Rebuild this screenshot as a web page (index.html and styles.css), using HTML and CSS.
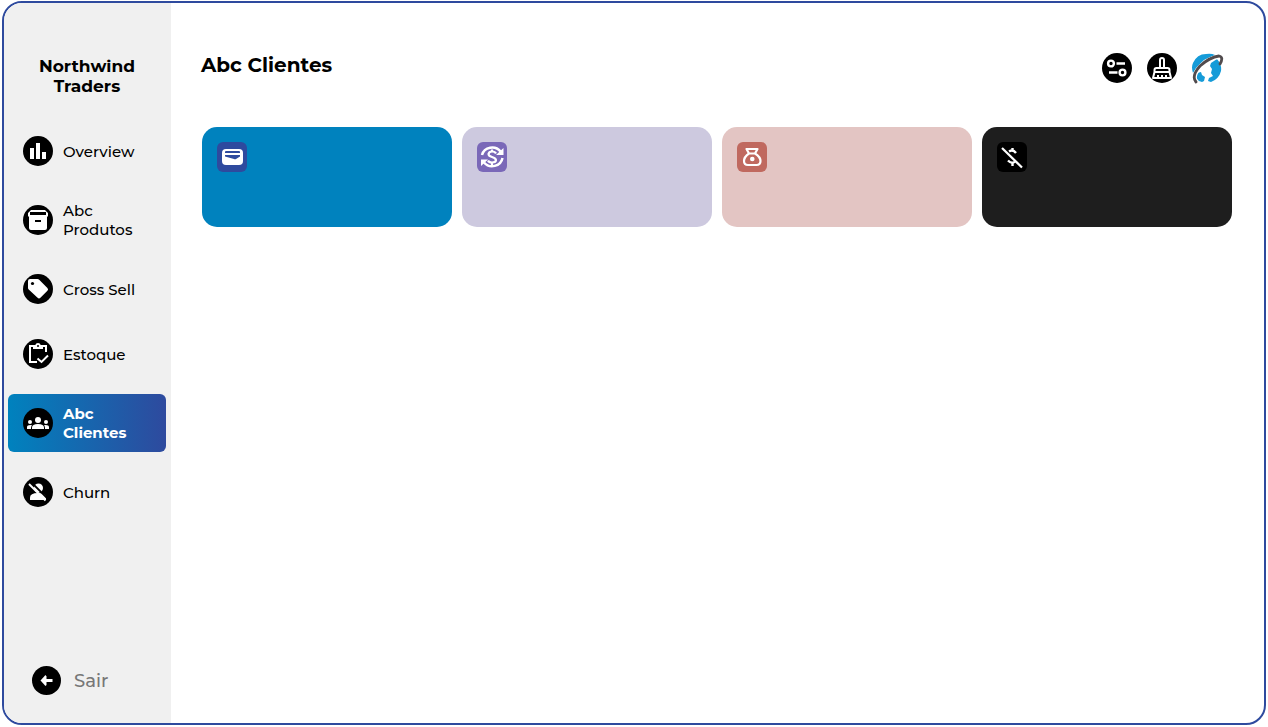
FILE: index.html
```html
<!DOCTYPE html>
<html lang="pt-BR">
<head>
<meta charset="utf-8">
<title>Abc Clientes</title>
<link rel="stylesheet" href="styles.css">
</head>
<body>
<div class="frame">
  <aside class="sidebar">
    <h2 class="brand">Northwind Traders</h2>
    <nav class="nav">
      <a class="nav-item" href="#overview">
        <svg class="icon" viewBox="0 0 30 30"><circle cx="15" cy="15" r="15"/><path fill="#fff" d="M7 12h4v11H7zM13 7h4v16h-4zM19 16h4v7h-4z"/></svg>
        <span>Overview</span>
      </a>
      <a class="nav-item" href="#produtos">
        <svg class="icon" viewBox="0 0 30 30"><circle cx="15" cy="15" r="15"/><path fill="#fff" d="M8 5h14l3 3v3l-1 1v11q0 2-2 2H8q-2 0-2-2V12l-1-1V8z"/><path d="M7 7h16v3H7zM12 15h6v2h-6z"/></svg>
        <span>Abc Produtos</span>
      </a>
      <a class="nav-item" href="#cross">
        <svg class="icon" viewBox="0 0 30 30"><circle cx="15" cy="15" r="15"/><path fill="#fff" d="M7 5h7.500q1 0 1.700.7l8.200 8.200q1.400 1.400 0 2.800l-7 7q-1.400 1.400-2.800 0L5.700 15.500Q5 14.800 5 14V7q0-2 2-2z"/><circle cx="9.500" cy="9.500" r="1.600"/></svg>
        <span>Cross Sell</span>
      </a>
      <a class="nav-item" href="#estoque">
        <svg class="icon" viewBox="0 0 30 30"><circle cx="15" cy="15" r="15"/><path fill="none" stroke="#fff" stroke-width="2" d="M14 23H7V7h4M19 7h4v6M14.500 19.500l4 3.500 6.500-6.500"/><path fill="#fff" d="M10 6h2.300a2.800 2.800 0 0 1 5.400 0H20v4H10z"/><circle cx="15" cy="7" r="1"/></svg>
        <span>Estoque</span>
      </a>
      <a class="nav-item active" href="#clientes" aria-current="page">
        <svg class="icon" viewBox="0 0 30 30"><circle cx="15" cy="15" r="15"/><g fill="#fff"><circle cx="15" cy="12" r="3"/><path d="M9 21v-1.500q0-3.500 6-3.500t6 3.500V21z"/><circle cx="7" cy="14" r="2"/><circle cx="23" cy="14" r="2"/><path d="M4 21v-2q0-2 3.500-2l1.500.3Q8 18.500 8 20v1zM26 21v-2q0-2-3.500-2l-1.500.3q1 1.200 1 2.700v1z"/></g></svg>
        <span>Abc Clientes</span>
      </a>
      <a class="nav-item" href="#churn">
        <svg class="icon" viewBox="0 0 30 30"><circle cx="15" cy="15" r="15"/><circle cx="15.500" cy="11" r="4.500" fill="#fff"/><path fill="#fff" d="M7 23v-2.500Q7 16 15 16q8 0 8 5v2z"/><path stroke="#000" stroke-width="2" d="M8.400 5.400l16 16"/><path stroke="#fff" stroke-width="2" d="M6 7l16.500 16.500"/></svg>
        <span>Churn</span>
      </a>
    </nav>
    <a class="exit" href="#sair">
      <svg class="exit-icon" viewBox="0 0 29 29"><circle cx="14.500" cy="14.500" r="14.500"/><path fill="none" stroke="#fff" stroke-width="3" d="M20.500 14.500H11"/><path fill="#fff" d="M8.500 14.500l5-5.500 1 1.500v8.500l-1 1z"/></svg>
      <span>Sair</span>
    </a>
  </aside>
  <main class="main">
    <header class="header">
      <h1 class="title">Abc Clientes</h1>
      <div class="actions">
        <button class="action" type="button" aria-label="Filtros">
          <svg class="icon" viewBox="0 0 30 30"><circle cx="15" cy="15" r="15"/><g fill="none" stroke="#fff" stroke-width="2.400"><circle cx="9" cy="10.500" r="2.900"/><circle cx="20.500" cy="19.500" r="2.900"/><path stroke-width="2.600" d="M14.500 10.500H23M7 19.500h8.500"/></g></svg>
        </button>
        <button class="action" type="button" aria-label="Limpar filtros">
          <svg class="icon" viewBox="0 0 30 30"><circle cx="15" cy="15" r="15"/><path fill="none" stroke="#fff" stroke-width="2" stroke-linejoin="round" d="M13 15V7q0-2 2-2t2 2v8M7.500 19v-2q0-2 2-2h11q2 0 2 2v2zM7.500 19L6 25h18l-1.500-6M11 25v-3M15 25v-3M19 25v-3"/></svg>
        </button>
        <a class="action" href="#site" aria-label="Site">
          <svg class="globe" viewBox="0 0 32 34"><path fill="#159bd8" d="M1 10Q5 1 14 1q5-1 9 1L12 7 4 15 1 20Q-1 14 1 10zM19 10l6-4q5 6 4 12-2 8-10 11l-3-1 1-3 4-2-2-3 1-4-2-3zM5 20l4-1 1 3 3 2-1 4-2 1q-4-1-6-4z"/><path fill="none" stroke="#fff" stroke-width="4" d="M4 28Q0 22 10 12 19 3 29 4"/><path fill="none" stroke="#514b4d" stroke-width="2.800" stroke-linecap="round" d="M4 29Q-1 23 8 13 18 4 27 3q5 1 1 8"/></svg>
        </a>
      </div>
    </header>
    <section class="cards">
      <article class="card blue">
        <svg class="icon" viewBox="0 0 30 30"><rect width="30" height="30" rx="6" fill="#2e4a9e"/><rect x="5" y="7" width="21" height="16" rx="4" fill="#fff"/><path fill="#2e4a9e" d="M8 10q0-1 1-1h13q1 0 1 1v1H8zM8 13h15v1.500L19 17q-1 .4-2 0l-9-2.500z"/></svg>
      </article>
      <article class="card purple">
        <svg class="icon" viewBox="0 0 30 30"><rect width="30" height="30" rx="6" fill="#7a68b8"/><g fill="none" stroke="#fff"><path stroke-width="2.500" d="M5 13A10.500 10 0 0 1 23.500 9.500M25.500 16A10.500 10 0 0 1 7 20.500"/><path stroke-width="2.200" d="M19 11.500q-1-2-4-2t-3.500 2.500q0 2 3.500 3t4 3q0 2.500-4 2.500-3 0-4-2M15 7.500v2M15 20.500v2.500"/></g><path fill="#fff" d="M26.500 6v7H19zM4 24v-6.500h7z"/></svg>
      </article>
      <article class="card rose">
        <svg class="icon" viewBox="0 0 30 30"><rect width="30" height="30" rx="6" fill="#c0695f"/><g fill="none" stroke="#fff" stroke-width="2.200" stroke-linejoin="round"><path d="M9.500 7h11l-2.500 4.500h-6zM12 11.500Q7 15 7 19q0 4 4 4h8.500q4 0 4-4 0-4-5.500-7.500"/></g><circle cx="15.300" cy="17" r="2.300" fill="#fff"/></svg>
      </article>
      <article class="card dark">
        <svg class="icon" viewBox="0 0 30 30"><rect width="30" height="30" rx="6"/><path fill="none" stroke="#fff" stroke-width="2.400" d="M12 9.500q4-2.500 7 1.500M15.500 6v3M11 18.500q4 4 7 1M15.500 20v4"/><path stroke="#fff" stroke-width="2.200" d="M5 6l20 19.500"/></svg>
      </article>
    </section>
  </main>
</div>
</body>
</html>
```
FILE: styles.css
```css
* { box-sizing: border-box; }

body {
  margin: 0;
  padding: 1px 2px 2px;
  min-height: 100vh;
  display: flex;
  font-family: Montserrat, Inter, sans-serif;
  color: #000;
  background: #fff;
}

.frame {
  flex: 1;
  display: flex;
  overflow: hidden;
  border: 2px solid #2e4a9e;
  border-radius: 20px;
}

.sidebar {
  flex: 0 0 167px;
  display: flex;
  flex-direction: column;
  padding: 53px 5px 28px 4px;
  background: #f0f0f0;
}

.brand {
  margin: 0 24px 30px;
  font-size: 17px;
  line-height: 20px;
  font-weight: 700;
  text-align: center;
}

.nav {
  display: flex;
  flex-direction: column;
  gap: 15px;
}

.nav-item {
  display: flex;
  align-items: center;
  gap: 10px;
  padding: 10px 15px;
  border-radius: 6px;
  font-size: 15px;
  font-weight: 500;
  line-height: 19px;
  color: #000;
  text-decoration: none;
}

.nav-item.active {
  color: #fff;
  font-weight: 700;
  background: linear-gradient(90deg, #0082be, #2e4a9e);
}

.icon {
  display: block;
  flex: none;
  width: 30px;
  height: 30px;
}

.exit {
  display: flex;
  align-items: center;
  gap: 13px;
  margin-top: auto;
  padding-left: 24px;
  font-size: 18px;
  font-weight: 500;
  line-height: 24px;
  color: #777;
  text-decoration: none;
}

.exit-icon {
  width: 29px;
  height: 29px;
}

.main {
  flex: 1;
  padding: 49px 32px 32px 30px;
}

.header {
  display: flex;
  justify-content: space-between;
  margin-bottom: 40px;
}

.title {
  margin: 0;
  font-size: 20px;
  line-height: 26px;
  font-weight: 700;
}

.actions {
  display: flex;
  gap: 15px;
  padding: 1px 8px 0 0;
}

.action {
  display: block;
  height: 34px;
  padding: 0;
  border: 0;
  background: none;
  cursor: pointer;
}

button.action {
  height: 30px;
}

.globe {
  display: block;
  width: 32px;
  height: 34px;
}

.cards {
  display: grid;
  grid-template-columns: repeat(4, 1fr);
  gap: 10px;
  padding-left: 1px;
}

.card {
  min-height: 100px;
  padding: 15px;
  border-radius: 15px;
}

.blue { background: #0082be; }
.purple { background: #cdc9df; }
.rose { background: #e3c5c3; }
.dark { background: #1e1e1e; }
```
